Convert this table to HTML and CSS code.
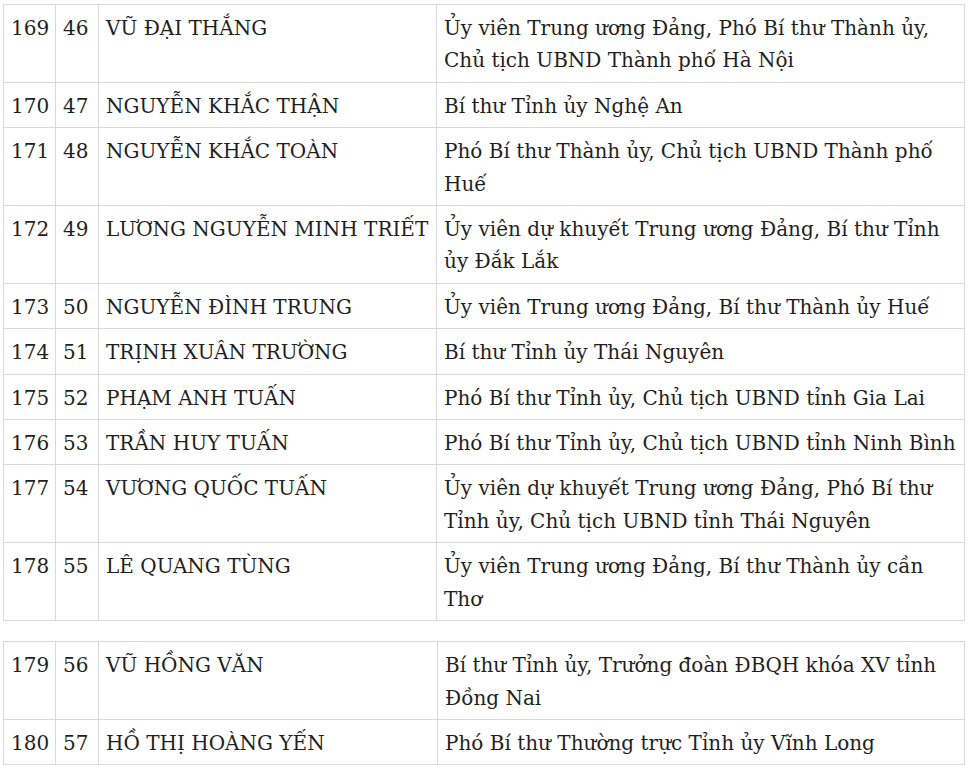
FILE: index.html
```html
<!DOCTYPE html>
<html lang="vi">
<head>
<meta charset="utf-8">
<title>Danh sách</title>
<link rel="stylesheet" href="styles.css">
</head>
<body>
<table class="list list-a">
  <colgroup><col class="c-stt"><col class="c-no"><col class="c-name"><col class="c-role"></colgroup>
  <tbody>
    <tr><td>169</td><td>46</td><td>VŨ ĐẠI THẮNG</td><td>Ủy viên Trung ương Đảng, Phó Bí thư Thành ủy, Chủ tịch UBND Thành phố Hà Nội</td></tr>
    <tr><td>170</td><td>47</td><td>NGUYỄN KHẮC THẬN</td><td>Bí thư Tỉnh ủy Nghệ An</td></tr>
    <tr><td>171</td><td>48</td><td>NGUYỄN KHẮC TOÀN</td><td>Phó Bí thư Thành ủy, Chủ tịch UBND Thành phố Huế</td></tr>
    <tr><td>172</td><td>49</td><td>LƯƠNG NGUYỄN MINH TRIẾT</td><td>Ủy viên dự khuyết Trung ương Đảng, Bí thư Tỉnh ủy Đắk Lắk</td></tr>
    <tr><td>173</td><td>50</td><td>NGUYỄN ĐÌNH TRUNG</td><td>Ủy viên Trung ương Đảng, Bí thư Thành ủy Huế</td></tr>
    <tr><td>174</td><td>51</td><td>TRỊNH XUÂN TRƯỜNG</td><td>Bí thư Tỉnh ủy Thái Nguyên</td></tr>
    <tr><td>175</td><td>52</td><td>PHẠM ANH TUẤN</td><td>Phó Bí thư Tỉnh ủy, Chủ tịch UBND tỉnh Gia Lai</td></tr>
    <tr><td>176</td><td>53</td><td>TRẦN HUY TUẤN</td><td>Phó Bí thư Tỉnh ủy, Chủ tịch UBND tỉnh Ninh Bình</td></tr>
    <tr><td>177</td><td>54</td><td>VƯƠNG QUỐC TUẤN</td><td>Ủy viên dự khuyết Trung ương Đảng, Phó Bí thư Tỉnh ủy, Chủ tịch UBND tỉnh Thái Nguyên</td></tr>
    <tr><td>178</td><td>55</td><td>LÊ QUANG TÙNG</td><td>Ủy viên Trung ương Đảng, Bí thư Thành ủy cần Thơ</td></tr>
  </tbody>
</table>
<table class="list list-b">
  <colgroup><col class="c-stt"><col class="c-no"><col class="c-name"><col class="c-role"></colgroup>
  <tbody>
    <tr><td>179</td><td>56</td><td>VŨ HỒNG VĂN</td><td>Bí thư Tỉnh ủy, Trưởng đoàn ĐBQH khóa XV tỉnh Đồng Nai</td></tr>
    <tr><td>180</td><td>57</td><td>HỒ THỊ HOÀNG YẾN</td><td>Phó Bí thư Thường trực Tỉnh ủy Vĩnh Long</td></tr>
  </tbody>
</table>
</body>
</html>
```
FILE: styles.css
```css
html, body {
  background: #ffffff;
}
body {
  margin: 4px 0 0 3px;
  font-family: "DejaVu Serif", "Liberation Serif", serif;
  font-size: 20px;
  line-height: 32.4px;
  color: #1f1f1f;
}
.list {
  width: 962px;
  border-collapse: collapse;
  table-layout: fixed;
}
.list td {
  border: 1px solid #d9d9d9;
  padding: 7px 7px 5px 7px;
  vertical-align: top;
  text-align: left;
}
.list-b {
  margin-top: 20px;
}
.c-stt { width: 52px; }
.c-no { width: 43px; }
.list-a .c-name { width: 338px; }
.list-b .c-name { width: 339px; }
```
